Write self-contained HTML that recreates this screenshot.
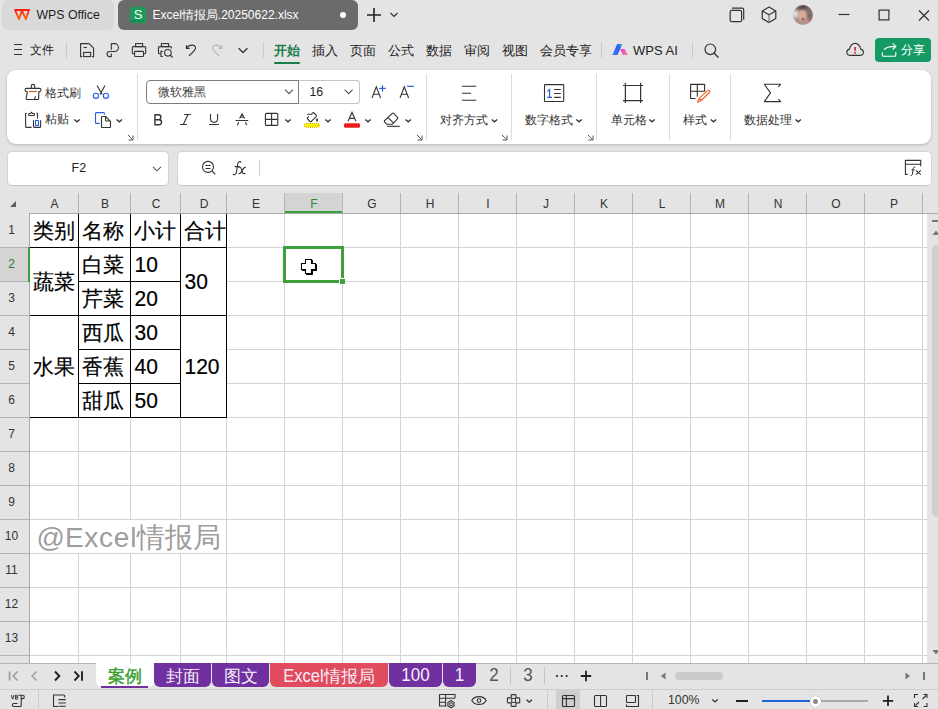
<!DOCTYPE html><html><head><meta charset="utf-8"><style>
html,body{margin:0;padding:0;}
body{width:938px;height:709px;position:relative;overflow:hidden;background:#e4e4e4;font-family:"Liberation Sans", sans-serif;}
div,svg{box-sizing:border-box;}
</style></head><body>
<div style="position:absolute;left:2px;top:0px;width:112px;height:30px;background:#d9d9d9;border-radius:6px;"></div>
<div style="position:absolute;left:36.5px;top:8px;font-size:12.3px;line-height:14px;color:#1f1f1f;white-space:nowrap;">WPS Office</div>
<div style="position:absolute;left:118px;top:0px;width:240px;height:30px;background:#6b6b6b;border-radius:6px;"></div>
<div style="position:absolute;left:130px;top:7px;width:16px;height:16px;background:#1a9c5b;border-radius:2px;"></div>
<div style="position:absolute;left:133.8px;top:8px;font-size:13px;line-height:14px;color:#fff;white-space:nowrap;">S</div>
<div style="position:absolute;left:131px;top:20px;width:14px;height:2px;background:repeating-linear-gradient(90deg,#0d7a43 0 1px,#1a9c5b 1px 2px);"></div>
<div style="position:absolute;left:152.5px;top:8px;font-size:12px;line-height:14px;color:#fff;white-space:nowrap;">Excel情报局.20250622.xlsx</div>
<div style="position:absolute;left:339.5px;top:12px;width:6px;height:6px;background:#fff;border-radius:50%;"></div>
<div style="position:absolute;left:793px;top:5px;width:20px;height:20px;border-radius:50%;overflow:hidden;background:radial-gradient(circle at 50% 70%,#8a3a44 0,rgba(138,58,68,0) 12%),radial-gradient(ellipse 26% 34% at 46% 52%,#dcb3a0 0,#d4a994 60%,rgba(212,169,148,0) 100%),radial-gradient(circle at 12% 45%,#eceaee 0,rgba(236,234,238,0) 28%),radial-gradient(ellipse 55% 35% at 50% 8%,#4c3e3c 0,rgba(76,62,60,0) 100%),radial-gradient(ellipse 22% 45% at 84% 50%,#6e6260 0,rgba(110,98,96,0) 100%),radial-gradient(circle at 78% 85%,#d08a86 0,rgba(208,138,134,0) 30%),#a8948c;"></div>
<div style="position:absolute;left:30px;top:43.5px;font-size:12px;line-height:13px;color:#222;white-space:nowrap;">文件</div>
<div style="position:absolute;left:66px;top:42px;width:1px;height:16px;background:#c9c9c9;"></div>
<div style="position:absolute;left:263px;top:42px;width:1px;height:16px;background:#c9c9c9;"></div>
<div style="position:absolute;left:274px;top:44px;font-size:13px;line-height:14px;color:#1b7d4c;white-space:nowrap;font-weight:bold;">开始</div>
<div style="position:absolute;left:274px;top:62px;width:26px;height:2px;background:#1b7d4c;border-radius:1px;"></div>
<div style="position:absolute;left:312px;top:44px;font-size:13px;line-height:14px;color:#222;white-space:nowrap;">插入</div>
<div style="position:absolute;left:350px;top:44px;font-size:13px;line-height:14px;color:#222;white-space:nowrap;">页面</div>
<div style="position:absolute;left:388px;top:44px;font-size:13px;line-height:14px;color:#222;white-space:nowrap;">公式</div>
<div style="position:absolute;left:426px;top:44px;font-size:13px;line-height:14px;color:#222;white-space:nowrap;">数据</div>
<div style="position:absolute;left:464px;top:44px;font-size:13px;line-height:14px;color:#222;white-space:nowrap;">审阅</div>
<div style="position:absolute;left:502px;top:44px;font-size:13px;line-height:14px;color:#222;white-space:nowrap;">视图</div>
<div style="position:absolute;left:540px;top:44px;font-size:13px;line-height:14px;color:#222;white-space:nowrap;">会员专享</div>
<div style="position:absolute;left:601px;top:42px;width:1px;height:16px;background:#c9c9c9;"></div>
<div style="position:absolute;left:633px;top:44px;font-size:13px;line-height:14px;color:#222;white-space:nowrap;">WPS AI</div>
<div style="position:absolute;left:692px;top:42px;width:1px;height:16px;background:#c9c9c9;"></div>
<div style="position:absolute;left:875px;top:38px;width:56px;height:24px;background:#169a65;border-radius:4px;"></div>
<div style="position:absolute;left:901px;top:43.5px;font-size:12.3px;line-height:13px;color:#fff;white-space:nowrap;">分享</div>
<div style="position:absolute;left:7px;top:70px;width:924px;height:74px;background:#fff;border-radius:9px;box-shadow:0 1px 3px rgba(0,0,0,0.2);"></div>
<div style="position:absolute;left:45px;top:86.5px;font-size:12px;line-height:12px;color:#333;white-space:nowrap;">格式刷</div>
<div style="position:absolute;left:45px;top:113px;font-size:12px;line-height:12px;color:#333;white-space:nowrap;">粘贴</div>
<div style="position:absolute;left:137px;top:74px;width:1px;height:66px;background:#dadada;"></div>
<div style="position:absolute;left:146px;top:80px;width:214px;height:24px;border:1px solid #7d7d7d;border-radius:4px;"></div>
<div style="position:absolute;left:298px;top:80px;width:62px;height:24px;border:1px solid #c6c6c6;border-left:1px solid #7d7d7d;border-radius:0 4px 4px 0;background:#fff;"></div>
<div style="position:absolute;left:158px;top:86px;font-size:12px;line-height:12px;color:#3a3a3a;white-space:nowrap;">微软雅黑</div>
<div style="position:absolute;left:309.5px;top:86px;font-size:12.3px;line-height:13px;color:#222;white-space:nowrap;">16</div>
<div style="position:absolute;left:426px;top:74px;width:1px;height:66px;background:#dadada;"></div>
<div style="position:absolute;left:440px;top:114px;font-size:12px;line-height:12px;color:#333;white-space:nowrap;">对齐方式</div>
<div style="position:absolute;left:511px;top:74px;width:1px;height:66px;background:#dadada;"></div>
<div style="position:absolute;left:525px;top:114px;font-size:12px;line-height:12px;color:#333;white-space:nowrap;">数字格式</div>
<div style="position:absolute;left:596px;top:74px;width:1px;height:66px;background:#dadada;"></div>
<div style="position:absolute;left:610.5px;top:114px;font-size:12px;line-height:12px;color:#333;white-space:nowrap;">单元格</div>
<div style="position:absolute;left:669px;top:74px;width:1px;height:66px;background:#dadada;"></div>
<div style="position:absolute;left:682.5px;top:114px;font-size:12px;line-height:12px;color:#333;white-space:nowrap;">样式</div>
<div style="position:absolute;left:730px;top:74px;width:1px;height:66px;background:#dadada;"></div>
<div style="position:absolute;left:744px;top:114px;font-size:12px;line-height:12px;color:#333;white-space:nowrap;">数据处理</div>
<div style="position:absolute;left:7px;top:151px;width:162px;height:35px;background:#fff;border:1px solid #d3d3d3;border-bottom-color:#c4c4c4;border-radius:5px;"></div>
<div style="position:absolute;left:71.5px;top:162px;font-size:12.5px;line-height:13px;color:#222;white-space:nowrap;">F2</div>
<div style="position:absolute;left:177px;top:151px;width:755px;height:35px;background:#fff;border:1px solid #d3d3d3;border-bottom-color:#c4c4c4;border-radius:5px;"></div>
<div style="position:absolute;left:259px;top:160px;width:1px;height:16px;background:#cfcfcf;"></div>
<div style="position:absolute;left:30px;top:214px;width:897px;height:449px;background:#fff;"></div>
<div style="position:absolute;left:285px;top:193px;width:57px;height:20px;background:#d4d4d4;"></div>
<div style="position:absolute;left:285px;top:211px;width:57px;height:2px;background:#3ba03b;"></div>
<div style="position:absolute;left:0px;top:248px;width:29px;height:33px;background:#d4d4d4;"></div>
<div style="position:absolute;left:78px;top:214px;width:1px;height:449px;background:#d4d4d4;"></div>
<div style="position:absolute;left:130px;top:214px;width:1px;height:449px;background:#d4d4d4;"></div>
<div style="position:absolute;left:180px;top:214px;width:1px;height:449px;background:#d4d4d4;"></div>
<div style="position:absolute;left:226px;top:214px;width:1px;height:449px;background:#d4d4d4;"></div>
<div style="position:absolute;left:284px;top:214px;width:1px;height:449px;background:#d4d4d4;"></div>
<div style="position:absolute;left:342px;top:214px;width:1px;height:449px;background:#d4d4d4;"></div>
<div style="position:absolute;left:400px;top:214px;width:1px;height:449px;background:#d4d4d4;"></div>
<div style="position:absolute;left:458px;top:214px;width:1px;height:449px;background:#d4d4d4;"></div>
<div style="position:absolute;left:516px;top:214px;width:1px;height:449px;background:#d4d4d4;"></div>
<div style="position:absolute;left:574px;top:214px;width:1px;height:449px;background:#d4d4d4;"></div>
<div style="position:absolute;left:632px;top:214px;width:1px;height:449px;background:#d4d4d4;"></div>
<div style="position:absolute;left:690px;top:214px;width:1px;height:449px;background:#d4d4d4;"></div>
<div style="position:absolute;left:748px;top:214px;width:1px;height:449px;background:#d4d4d4;"></div>
<div style="position:absolute;left:806px;top:214px;width:1px;height:449px;background:#d4d4d4;"></div>
<div style="position:absolute;left:864px;top:214px;width:1px;height:449px;background:#d4d4d4;"></div>
<div style="position:absolute;left:922px;top:214px;width:1px;height:449px;background:#d4d4d4;"></div>
<div style="position:absolute;left:30px;top:247px;width:897px;height:1px;background:#d4d4d4;"></div>
<div style="position:absolute;left:30px;top:281px;width:897px;height:1px;background:#d4d4d4;"></div>
<div style="position:absolute;left:30px;top:315px;width:897px;height:1px;background:#d4d4d4;"></div>
<div style="position:absolute;left:30px;top:349px;width:897px;height:1px;background:#d4d4d4;"></div>
<div style="position:absolute;left:30px;top:383px;width:897px;height:1px;background:#d4d4d4;"></div>
<div style="position:absolute;left:30px;top:417px;width:897px;height:1px;background:#d4d4d4;"></div>
<div style="position:absolute;left:30px;top:451px;width:897px;height:1px;background:#d4d4d4;"></div>
<div style="position:absolute;left:30px;top:485px;width:897px;height:1px;background:#d4d4d4;"></div>
<div style="position:absolute;left:30px;top:519px;width:897px;height:1px;background:#d4d4d4;"></div>
<div style="position:absolute;left:30px;top:553px;width:897px;height:1px;background:#d4d4d4;"></div>
<div style="position:absolute;left:30px;top:587px;width:897px;height:1px;background:#d4d4d4;"></div>
<div style="position:absolute;left:30px;top:621px;width:897px;height:1px;background:#d4d4d4;"></div>
<div style="position:absolute;left:30px;top:655px;width:897px;height:1px;background:#d4d4d4;"></div>
<div style="position:absolute;left:78px;top:193px;width:1px;height:20px;background:#b3b3b3;"></div>
<div style="position:absolute;left:130px;top:193px;width:1px;height:20px;background:#b3b3b3;"></div>
<div style="position:absolute;left:180px;top:193px;width:1px;height:20px;background:#b3b3b3;"></div>
<div style="position:absolute;left:226px;top:193px;width:1px;height:20px;background:#b3b3b3;"></div>
<div style="position:absolute;left:284px;top:193px;width:1px;height:20px;background:#b3b3b3;"></div>
<div style="position:absolute;left:342px;top:193px;width:1px;height:20px;background:#b3b3b3;"></div>
<div style="position:absolute;left:400px;top:193px;width:1px;height:20px;background:#b3b3b3;"></div>
<div style="position:absolute;left:458px;top:193px;width:1px;height:20px;background:#b3b3b3;"></div>
<div style="position:absolute;left:516px;top:193px;width:1px;height:20px;background:#b3b3b3;"></div>
<div style="position:absolute;left:574px;top:193px;width:1px;height:20px;background:#b3b3b3;"></div>
<div style="position:absolute;left:632px;top:193px;width:1px;height:20px;background:#b3b3b3;"></div>
<div style="position:absolute;left:690px;top:193px;width:1px;height:20px;background:#b3b3b3;"></div>
<div style="position:absolute;left:748px;top:193px;width:1px;height:20px;background:#b3b3b3;"></div>
<div style="position:absolute;left:806px;top:193px;width:1px;height:20px;background:#b3b3b3;"></div>
<div style="position:absolute;left:864px;top:193px;width:1px;height:20px;background:#b3b3b3;"></div>
<div style="position:absolute;left:922px;top:193px;width:1px;height:20px;background:#b3b3b3;"></div>
<div style="position:absolute;left:0px;top:247px;width:29px;height:1px;background:#b3b3b3;"></div>
<div style="position:absolute;left:0px;top:281px;width:29px;height:1px;background:#b3b3b3;"></div>
<div style="position:absolute;left:0px;top:315px;width:29px;height:1px;background:#b3b3b3;"></div>
<div style="position:absolute;left:0px;top:349px;width:29px;height:1px;background:#b3b3b3;"></div>
<div style="position:absolute;left:0px;top:383px;width:29px;height:1px;background:#b3b3b3;"></div>
<div style="position:absolute;left:0px;top:417px;width:29px;height:1px;background:#b3b3b3;"></div>
<div style="position:absolute;left:0px;top:451px;width:29px;height:1px;background:#b3b3b3;"></div>
<div style="position:absolute;left:0px;top:485px;width:29px;height:1px;background:#b3b3b3;"></div>
<div style="position:absolute;left:0px;top:519px;width:29px;height:1px;background:#b3b3b3;"></div>
<div style="position:absolute;left:0px;top:553px;width:29px;height:1px;background:#b3b3b3;"></div>
<div style="position:absolute;left:0px;top:587px;width:29px;height:1px;background:#b3b3b3;"></div>
<div style="position:absolute;left:0px;top:621px;width:29px;height:1px;background:#b3b3b3;"></div>
<div style="position:absolute;left:0px;top:655px;width:29px;height:1px;background:#b3b3b3;"></div>
<div style="position:absolute;left:29px;top:213px;width:909px;height:1px;background:#a9a9a9;"></div>
<div style="position:absolute;left:29px;top:213px;width:1px;height:450px;background:#a9a9a9;"></div>
<div style="position:absolute;left:28px;top:247px;width:2px;height:35px;background:#3ba03b;"></div>
<div style="position:absolute;left:30px;top:197px;width:49px;text-align:center;font-size:12px;line-height:14px;color:#333;white-space:nowrap;">A</div>
<div style="position:absolute;left:79px;top:197px;width:52px;text-align:center;font-size:12px;line-height:14px;color:#333;white-space:nowrap;">B</div>
<div style="position:absolute;left:131px;top:197px;width:50px;text-align:center;font-size:12px;line-height:14px;color:#333;white-space:nowrap;">C</div>
<div style="position:absolute;left:181px;top:197px;width:46px;text-align:center;font-size:12px;line-height:14px;color:#333;white-space:nowrap;">D</div>
<div style="position:absolute;left:227px;top:197px;width:58px;text-align:center;font-size:12px;line-height:14px;color:#333;white-space:nowrap;">E</div>
<div style="position:absolute;left:285px;top:197px;width:58px;text-align:center;font-size:12px;line-height:14px;color:#2e8b2e;white-space:nowrap;">F</div>
<div style="position:absolute;left:343px;top:197px;width:58px;text-align:center;font-size:12px;line-height:14px;color:#333;white-space:nowrap;">G</div>
<div style="position:absolute;left:401px;top:197px;width:58px;text-align:center;font-size:12px;line-height:14px;color:#333;white-space:nowrap;">H</div>
<div style="position:absolute;left:459px;top:197px;width:58px;text-align:center;font-size:12px;line-height:14px;color:#333;white-space:nowrap;">I</div>
<div style="position:absolute;left:517px;top:197px;width:58px;text-align:center;font-size:12px;line-height:14px;color:#333;white-space:nowrap;">J</div>
<div style="position:absolute;left:575px;top:197px;width:58px;text-align:center;font-size:12px;line-height:14px;color:#333;white-space:nowrap;">K</div>
<div style="position:absolute;left:633px;top:197px;width:58px;text-align:center;font-size:12px;line-height:14px;color:#333;white-space:nowrap;">L</div>
<div style="position:absolute;left:691px;top:197px;width:58px;text-align:center;font-size:12px;line-height:14px;color:#333;white-space:nowrap;">M</div>
<div style="position:absolute;left:749px;top:197px;width:58px;text-align:center;font-size:12px;line-height:14px;color:#333;white-space:nowrap;">N</div>
<div style="position:absolute;left:807px;top:197px;width:58px;text-align:center;font-size:12px;line-height:14px;color:#333;white-space:nowrap;">O</div>
<div style="position:absolute;left:865px;top:197px;width:58px;text-align:center;font-size:12px;line-height:14px;color:#333;white-space:nowrap;">P</div>
<div style="position:absolute;left:0px;top:222.6px;width:23px;text-align:center;font-size:12px;line-height:14px;color:#333;white-space:nowrap;">1</div>
<div style="position:absolute;left:0px;top:256.6px;width:23px;text-align:center;font-size:12px;line-height:14px;color:#2e7d32;white-space:nowrap;">2</div>
<div style="position:absolute;left:0px;top:290.6px;width:23px;text-align:center;font-size:12px;line-height:14px;color:#333;white-space:nowrap;">3</div>
<div style="position:absolute;left:0px;top:324.6px;width:23px;text-align:center;font-size:12px;line-height:14px;color:#333;white-space:nowrap;">4</div>
<div style="position:absolute;left:0px;top:358.6px;width:23px;text-align:center;font-size:12px;line-height:14px;color:#333;white-space:nowrap;">5</div>
<div style="position:absolute;left:0px;top:392.6px;width:23px;text-align:center;font-size:12px;line-height:14px;color:#333;white-space:nowrap;">6</div>
<div style="position:absolute;left:0px;top:426.6px;width:23px;text-align:center;font-size:12px;line-height:14px;color:#333;white-space:nowrap;">7</div>
<div style="position:absolute;left:0px;top:460.6px;width:23px;text-align:center;font-size:12px;line-height:14px;color:#333;white-space:nowrap;">8</div>
<div style="position:absolute;left:0px;top:494.6px;width:23px;text-align:center;font-size:12px;line-height:14px;color:#333;white-space:nowrap;">9</div>
<div style="position:absolute;left:0px;top:528.6px;width:23px;text-align:center;font-size:12px;line-height:14px;color:#333;white-space:nowrap;">10</div>
<div style="position:absolute;left:0px;top:562.6px;width:23px;text-align:center;font-size:12px;line-height:14px;color:#333;white-space:nowrap;">11</div>
<div style="position:absolute;left:0px;top:596.6px;width:23px;text-align:center;font-size:12px;line-height:14px;color:#333;white-space:nowrap;">12</div>
<div style="position:absolute;left:0px;top:630.6px;width:23px;text-align:center;font-size:12px;line-height:14px;color:#333;white-space:nowrap;">13</div>
<div style="position:absolute;left:78px;top:520px;width:1px;height:33px;background:#fff;"></div>
<div style="position:absolute;left:130px;top:520px;width:1px;height:33px;background:#fff;"></div>
<div style="position:absolute;left:180px;top:520px;width:1px;height:33px;background:#fff;"></div>
<div style="position:absolute;left:36.5px;top:521.5px;font-size:28px;line-height:32px;color:#9d9d9d;white-space:nowrap;">@<span style="letter-spacing:0.75px">Excel</span>情报局</div>
<div style="position:absolute;left:30px;top:214px;width:196px;height:203px;background:#fff;"></div>
<div style="position:absolute;left:30px;top:247px;width:197px;height:1px;background:#000;"></div>
<div style="position:absolute;left:79px;top:281px;width:102px;height:1px;background:#000;"></div>
<div style="position:absolute;left:30px;top:315px;width:197px;height:1px;background:#000;"></div>
<div style="position:absolute;left:79px;top:349px;width:102px;height:1px;background:#000;"></div>
<div style="position:absolute;left:79px;top:383px;width:102px;height:1px;background:#000;"></div>
<div style="position:absolute;left:30px;top:417px;width:197px;height:1px;background:#000;"></div>
<div style="position:absolute;left:78px;top:214px;width:1px;height:204px;background:#000;"></div>
<div style="position:absolute;left:130px;top:214px;width:1px;height:204px;background:#000;"></div>
<div style="position:absolute;left:180px;top:214px;width:1px;height:204px;background:#000;"></div>
<div style="position:absolute;left:226px;top:214px;width:1px;height:204px;background:#000;"></div>
<div style="position:absolute;left:33px;top:219px;font-size:21px;line-height:24px;color:#000;white-space:nowrap;-webkit-text-stroke:0.2px #000;">类别</div>
<div style="position:absolute;left:82px;top:219px;font-size:21px;line-height:24px;color:#000;white-space:nowrap;-webkit-text-stroke:0.2px #000;">名称</div>
<div style="position:absolute;left:134px;top:219px;font-size:21px;line-height:24px;color:#000;white-space:nowrap;-webkit-text-stroke:0.2px #000;">小计</div>
<div style="position:absolute;left:184px;top:219px;font-size:21px;line-height:24px;color:#000;white-space:nowrap;-webkit-text-stroke:0.2px #000;">合计</div>
<div style="position:absolute;left:33px;top:270px;font-size:21px;line-height:24px;color:#000;white-space:nowrap;-webkit-text-stroke:0.2px #000;">蔬菜</div>
<div style="position:absolute;left:82px;top:253px;font-size:21px;line-height:24px;color:#000;white-space:nowrap;-webkit-text-stroke:0.2px #000;">白菜</div>
<div style="position:absolute;left:82px;top:287px;font-size:21px;line-height:24px;color:#000;white-space:nowrap;-webkit-text-stroke:0.2px #000;">芹菜</div>
<div style="position:absolute;left:134.5px;top:253px;font-size:21px;line-height:24px;color:#000;white-space:nowrap;transform:scaleY(1.05);transform-origin:0 12.3px;-webkit-text-stroke:0.2px #000;">10</div>
<div style="position:absolute;left:134.5px;top:287px;font-size:21px;line-height:24px;color:#000;white-space:nowrap;transform:scaleY(1.05);transform-origin:0 12.3px;-webkit-text-stroke:0.2px #000;">20</div>
<div style="position:absolute;left:184.5px;top:270px;font-size:21px;line-height:24px;color:#000;white-space:nowrap;transform:scaleY(1.05);transform-origin:0 12.3px;-webkit-text-stroke:0.2px #000;">30</div>
<div style="position:absolute;left:33px;top:355px;font-size:21px;line-height:24px;color:#000;white-space:nowrap;-webkit-text-stroke:0.2px #000;">水果</div>
<div style="position:absolute;left:82px;top:321px;font-size:21px;line-height:24px;color:#000;white-space:nowrap;-webkit-text-stroke:0.2px #000;">西瓜</div>
<div style="position:absolute;left:82px;top:355px;font-size:21px;line-height:24px;color:#000;white-space:nowrap;-webkit-text-stroke:0.2px #000;">香蕉</div>
<div style="position:absolute;left:82px;top:389px;font-size:21px;line-height:24px;color:#000;white-space:nowrap;-webkit-text-stroke:0.2px #000;">甜瓜</div>
<div style="position:absolute;left:134.5px;top:321px;font-size:21px;line-height:24px;color:#000;white-space:nowrap;transform:scaleY(1.05);transform-origin:0 12.3px;-webkit-text-stroke:0.2px #000;">30</div>
<div style="position:absolute;left:134.5px;top:355px;font-size:21px;line-height:24px;color:#000;white-space:nowrap;transform:scaleY(1.05);transform-origin:0 12.3px;-webkit-text-stroke:0.2px #000;">40</div>
<div style="position:absolute;left:134.5px;top:389px;font-size:21px;line-height:24px;color:#000;white-space:nowrap;transform:scaleY(1.05);transform-origin:0 12.3px;-webkit-text-stroke:0.2px #000;">50</div>
<div style="position:absolute;left:184.5px;top:355px;font-size:21px;line-height:24px;color:#000;white-space:nowrap;transform:scaleY(1.05);transform-origin:0 12.3px;-webkit-text-stroke:0.2px #000;">120</div>
<div style="position:absolute;left:283px;top:246px;width:61px;height:37px;border:3px solid #3da03d;"></div>
<div style="position:absolute;left:339px;top:278px;width:6px;height:6px;background:#fff;"></div>
<div style="position:absolute;left:340px;top:279px;width:5px;height:5px;background:#3da03d;"></div>
<div style="position:absolute;left:927px;top:214px;width:11px;height:449px;background:#e4e4e4;"></div>
<div style="position:absolute;left:932px;top:220px;width:6px;height:2px;background:#777;"></div>
<div style="position:absolute;left:932px;top:245px;width:10px;height:272px;background:#cfcfcf;border-radius:5px;"></div>
<div style="position:absolute;left:0px;top:663px;width:938px;height:26px;background:#e4e4e4;"></div>
<div style="position:absolute;left:0px;top:663px;width:938px;height:1px;background:#b5b5b5;"></div>
<div style="position:absolute;left:96px;top:663px;width:58px;height:24px;background:#fff;border-radius:0 0 6px 6px;"></div>
<div style="position:absolute;left:108px;top:667px;font-size:16.5px;line-height:18px;color:#3a9e2e;white-space:nowrap;-webkit-text-stroke:0.45px #3a9e2e;">案例</div>
<div style="position:absolute;left:101px;top:686px;width:47px;height:2px;background:#7030a0;"></div>
<div style="position:absolute;left:154px;top:663px;width:57px;height:24px;background:#7030a0;border-radius:0 0 6px 6px;"></div>
<div style="position:absolute;left:154px;top:667.2px;width:57px;text-align:center;font-size:16.5px;line-height:18px;color:#f6eef8;white-space:nowrap;">封面</div>
<div style="position:absolute;left:212px;top:663px;width:57px;height:24px;background:#7030a0;border-radius:0 0 6px 6px;"></div>
<div style="position:absolute;left:212px;top:667.2px;width:57px;text-align:center;font-size:16.5px;line-height:18px;color:#f6eef8;white-space:nowrap;">图文</div>
<div style="position:absolute;left:270px;top:663px;width:118px;height:24px;background:#e04b5e;border-radius:0 0 6px 6px;"></div>
<div style="position:absolute;left:270px;top:667.2px;width:118px;text-align:center;font-size:16.5px;line-height:18px;color:#f6eef8;white-space:nowrap;"><span style="display:inline-block;transform:scaleY(1.12);transform-origin:50% 14.2px;">Excel</span>情报局</div>
<div style="position:absolute;left:389px;top:663px;width:53px;height:24px;background:#7030a0;border-radius:0 0 6px 6px;"></div>
<div style="position:absolute;left:389px;top:667.2px;width:53px;text-align:center;font-size:17px;line-height:18px;color:#f6eef8;white-space:nowrap;"><span style="display:inline-block;transform:scaleY(1.12);transform-origin:50% 14.2px;">100</span></div>
<div style="position:absolute;left:443px;top:663px;width:33px;height:24px;background:#7030a0;border-radius:0 0 6px 6px;"></div>
<div style="position:absolute;left:443px;top:667.2px;width:33px;text-align:center;font-size:17px;line-height:18px;color:#f6eef8;white-space:nowrap;"><span style="display:inline-block;transform:scaleY(1.12);transform-origin:50% 14.2px;">1</span></div>
<div style="position:absolute;left:480px;top:667.2px;width:28px;text-align:center;font-size:17px;line-height:18px;color:#555;white-space:nowrap;"><span style="display:inline-block;transform:scaleY(1.12);transform-origin:50% 14.2px;">2</span></div>
<div style="position:absolute;left:510px;top:667px;width:1px;height:17px;background:#c4c4c4;"></div>
<div style="position:absolute;left:514px;top:667.2px;width:28px;text-align:center;font-size:17px;line-height:18px;color:#555;white-space:nowrap;"><span style="display:inline-block;transform:scaleY(1.12);transform-origin:50% 14.2px;">3</span></div>
<div style="position:absolute;left:544px;top:667px;width:1px;height:17px;background:#c4c4c4;"></div>
<div style="position:absolute;left:646px;top:672px;width:2px;height:8px;background:#777;"></div>
<div style="position:absolute;left:675px;top:672px;width:48px;height:8px;background:#cbcbcb;border-radius:4px;"></div>
<div style="position:absolute;left:923px;top:672px;width:2px;height:8px;background:#777;"></div>
<div style="position:absolute;left:0px;top:689px;width:938px;height:1px;background:#cccccc;"></div>
<div style="position:absolute;left:38px;top:690px;width:1px;height:19px;background:#cccccc;"></div>
<div style="position:absolute;left:547px;top:690px;width:1px;height:19px;background:#cccccc;"></div>
<div style="position:absolute;left:556px;top:689px;width:24px;height:20px;background:#cfcfcf;border-radius:3px 3px 0 0;"></div>
<div style="position:absolute;left:652px;top:690px;width:1px;height:19px;background:#cccccc;"></div>
<div style="position:absolute;left:668px;top:694px;font-size:12.3px;line-height:13px;color:#333;white-space:nowrap;">100%</div>
<div style="position:absolute;left:736px;top:700px;width:12px;height:2px;background:#222;"></div>
<div style="position:absolute;left:762px;top:700px;width:50px;height:2px;background:#2563d9;"></div>
<div style="position:absolute;left:812px;top:700px;width:56px;height:2px;background:#a9a9a9;"></div>
<div style="position:absolute;left:810px;top:695.5px;width:11px;height:11px;background:#fff;border-radius:50%;box-shadow:0 0 1px rgba(0,0,0,.45);"></div>
<div style="position:absolute;left:813px;top:698.5px;width:5px;height:5px;background:#8a8a8a;border-radius:50%;"></div>
<svg style="position:absolute;left:0;top:0;" width="938" height="709" viewBox="0 0 938 709" fill="none"><defs><linearGradient id="wl" x1="0" y1="9" x2="0" y2="20" gradientUnits="userSpaceOnUse"><stop offset="0" stop-color="#ff1616"/><stop offset="1" stop-color="#ff6a00"/></linearGradient><linearGradient id="g1" x1="612" y1="0" x2="628" y2="0" gradientUnits="userSpaceOnUse"><stop offset="0" stop-color="#3f6ff5"/><stop offset="0.55" stop-color="#9d5cf2"/><stop offset="1" stop-color="#f7708f"/></linearGradient></defs><path d="M15 10H22.2L19 19.2Z M21.8 10H29L25.8 19.2Z" stroke="url(#wl)" stroke-width="1.8" stroke-linejoin="round"/><path d="M374 8V22 M367 15H381" stroke="#222" stroke-width="1.6" /><path d="M390.5 13L394 16.5L397.5 13" stroke="#333" stroke-width="1.2" /><path d="M732 8.2H742.2a1.5 1.5 0 0 1 1.5 1.5V19.7" stroke="#333" stroke-width="1.2" /><rect x="730.2" y="10.4" width="11.4" height="11.3" rx="1.5" stroke="#333" stroke-width="1.2"/><path d="M769 7L775.8 11V18.6L769 22.5L762.2 18.6V11Z M762.4 11.1L769 14.8L775.6 11.1" stroke="#333" stroke-width="1.2" stroke-linejoin="round"/><path d="M769 14.8V22.3" stroke="#777" stroke-width="1.2" /><path d="M838.5 14.5H849.5" stroke="#333" stroke-width="1.2" /><rect x="879.1" y="10.1" width="9.8" height="9.8" stroke="#333" stroke-width="1.2"/><path d="M919 10.5L929 20.5M929 10.5L919 20.5" stroke="#333" stroke-width="1.2" /><path d="M14 44.5H22M14 49.5H22M14 54.5H22" stroke="#333" stroke-width="1.1" /><path d="M82.2 56.6H80.6V43.6H89L93.6 48.2V56.6H92" stroke="#333" stroke-width="1.1" stroke-linejoin="round"/><rect x="83.6" y="52.4" width="7" height="4.2" stroke="#333" stroke-width="1.1"/><path d="M83.6 47.5H86.8" stroke="#333" stroke-width="1.1" /><path d="M111.3 49.7V43.6H114.8A3.6 3.95 0 0 1 114.8 51.5H109.6A2.55 2.55 0 0 0 109.6 56.6H111.3V53.5" stroke="#333" stroke-width="1.1" stroke-linejoin="round"/><rect x="135.6" y="43.6" width="7" height="3" stroke="#333" stroke-width="1.1"/><path d="M134.5 53.8H133.3a1 1 0 0 1-1-1V47.6a1 1 0 0 1 1-1H144.7a1 1 0 0 1 1 1V52.8a1 1 0 0 1-1 1H143.5" stroke="#333" stroke-width="1.1" /><rect x="134.6" y="51.4" width="8.9" height="5.1" rx="0.8" stroke="#333" stroke-width="1.1"/><rect x="161.4" y="43.6" width="7.2" height="3" stroke="#333" stroke-width="1.1"/><path d="M160.8 53.8H159.5a1 1 0 0 1-1-1V47.6a1 1 0 0 1 1-1H170.5a1 1 0 0 1 1 1V48.5" stroke="#333" stroke-width="1.1" /><path d="M162.8 51.4H161V56.5H162.8" stroke="#333" stroke-width="1.1" /><circle cx="167.9" cy="52.8" r="3.3" stroke="#333" stroke-width="1.1"/><path d="M170.3 55.2L172.6 57.5" stroke="#333" stroke-width="1.2" /><path d="M186.5 45.2V48.4H189.7" stroke="#333" stroke-width="1.3" /><path d="M186.7 48.2C188.8 44.5 195.5 43.6 195.5 48.2C195.5 50 192.5 52.5 189 55.8" stroke="#333" stroke-width="1.1" /><path d="M221.5 45.2V48.4H218.3" stroke="#b8b8b8" stroke-width="1.3" /><path d="M221.3 48.2C219.2 44.5 212.5 43.6 212.5 48.2C212.5 50 215.5 52.5 219 55.8" stroke="#b8b8b8" stroke-width="1.1" /><path d="M238.6 48.3L243 52.5L247.4 48.3" stroke="#333" stroke-width="1.3" /><defs><linearGradient id="ab" x1="612" y1="55" x2="622" y2="44" gradientUnits="userSpaceOnUse"><stop offset="0" stop-color="#3d7bf7"/><stop offset="0.7" stop-color="#2f5cf0"/><stop offset="1" stop-color="#1fb8e8"/></linearGradient><linearGradient id="ap" x1="620" y1="49" x2="628" y2="55" gradientUnits="userSpaceOnUse"><stop offset="0" stop-color="#f03ce0"/><stop offset="0.6" stop-color="#f55fb0"/><stop offset="1" stop-color="#fb9a70"/></linearGradient></defs><path d="M612.4 54.9L617.2 43.9H622.3L617.5 54.9Z" fill="url(#ab)"/><path d="M620 49H624.7L627.9 54.9H623Z" fill="url(#ap)"/><circle cx="710.3" cy="49.3" r="5.3" stroke="#333" stroke-width="1.2"/><path d="M714.2 53.2L718.5 57.5" stroke="#333" stroke-width="1.3" /><path d="M850.8 55.4H859.8C862.2 55.4 863.4 53.9 863.4 52.2C863.4 50.6 862.3 49.5 860.8 49.1C859.8 45.4 857.6 43.4 855.1 43.4C852.6 43.4 850.4 45.4 849.4 49.1C847.9 49.5 846.8 50.6 846.8 52.2C846.8 53.9 848.2 55.4 850.8 55.4Z" stroke="#333" stroke-width="1.1" /><path d="M855.1 47V50.8" stroke="#e0243c" stroke-width="1.7" /><circle cx="855.1" cy="52.7" r="0.95" fill="#e0243c"/><path d="M882.3 52.3V55a1.3 1.3 0 0 0 1.3 1.3H894.5a1.3 1.3 0 0 0 1.3-1.3V52.3" stroke="#fff" stroke-width="1.1" /><path d="M884 49.8C886 46.8 889.5 46.4 895.6 46.4 M892.6 43.3L895.8 46.4L892.6 49.5" stroke="#fff" stroke-width="1.1" /><path d="M31.3 88.4V86.1a1.7 1.7 0 0 1 3.4 0V88.4 M27.4 91.6H26.6a1.6 1.6 0 0 1 0-3.2H39.4a1.6 1.6 0 0 1 0 3.2H38.6 M27.4 91.6L26.2 98.2a1 1 0 0 0 1 1.3H37.6a1 1 0 0 0 1-0.9L38.9 91.6 M35.5 96.4L34.5 99.2" stroke="#333" stroke-width="1.1" stroke-linejoin="round"/><path d="M29 91.5H36.8" stroke="#d9581e" stroke-width="1.2" /><path d="M97.1 85.4L102.2 94.6 M105 85.4L99.9 94.6" stroke="#333" stroke-width="1.1" /><circle cx="95.9" cy="95.8" r="2.6" stroke="#2a5ee8" stroke-width="1.15"/><circle cx="105.9" cy="95.8" r="2.6" stroke="#2a5ee8" stroke-width="1.15"/><path d="M26.8 113.3H26.2a0.6 0.6 0 0 0-0.6 0.6V126.8a0.6 0.6 0 0 0 .6.6H31.6 M36.3 113.3H36.9a0.6 0.6 0 0 1 .6.6V118.6 M33.5 120.2V126.8a0.6 0.6 0 0 0 .6.6H40a0.6 0.6 0 0 0 .6-.6V120.2" stroke="#333" stroke-width="1.1" /><path d="M29.2 113.4H30.6L31.5 112.4L32.4 113.4H33.8a0.6 0.6 0 0 1 .6.6V114.9a0.6 0.6 0 0 1-.6.6H29.2a0.6 0.6 0 0 1-.6-.6V114a0.6 0.6 0 0 1 .6-.6Z" stroke="#333" stroke-width="1.05" /><rect x="35.5" y="120.5" width="3" height="5" stroke="#2a5ee8" stroke-width="1.1"/><path d="M74.3 119.4L77.0 121.80000000000001L79.7 119.4" stroke="#333" stroke-width="1.3" /><path d="M104.5 114.4V113.3a0.7 0.7 0 0 0-.7-.7H96.2a0.7 0.7 0 0 0-.7.7V122.8a0.6 0.6 0 0 0 .6.6H99.7" stroke="#2a5ee8" stroke-width="1.1" /><path d="M102.3 116.5H105.6L110.5 121.4V126.8a0.7 0.7 0 0 1-.7.7H102.2a0.7 0.7 0 0 1-.7-.7V117.2a0.7 0.7 0 0 1 .7-.7Z M105.6 116.6V120.4a0.6 0.6 0 0 0 .6.6H110.4" stroke="#333" stroke-width="1.1" stroke-linejoin="round"/><path d="M116.6 119.4L119.3 121.80000000000001L122.0 119.4" stroke="#333" stroke-width="1.3" /><path d="M128 135L132.5 139.5M133 135.5V140H128.5" stroke="#555" stroke-width="1" /><path d="M285 89.6L289 93.6L293 89.6" stroke="#555" stroke-width="1.1" /><path d="M344.6 89.6L348.6 93.6L352.6 89.6" stroke="#555" stroke-width="1.1" /><path d="M372 98L376.3 86.8L380.6 98 M373.6 94.2H379" stroke="#333" stroke-width="1.1" /><path d="M382.5 85.2V91.8 M379.2 88.4H385.8" stroke="#2a5ee8" stroke-width="1.2" /><path d="M400 98L404.3 86.8L408.6 98 M401.6 94.2H407" stroke="#333" stroke-width="1.1" /><path d="M407.1 86.3H414" stroke="#2a5ee8" stroke-width="1.2" /><path d="M154.9 114.7H158.4a2.5 2.5 0 0 1 0 5H154.9Z M154.9 119.7H159a2.55 2.55 0 0 1 0 5.1H154.9Z" stroke="#333" stroke-width="1.4" stroke-linejoin="round"/><path d="M184.1 114.5H190.8 M180.1 124.5H186.8 M188 114.5L183.3 124.5" stroke="#333" stroke-width="1.1" /><path d="M210.5 114.1V118.8a3.55 3.55 0 0 0 7.1 0V114.1 M209.1 124.5H218.9" stroke="#333" stroke-width="1.1" /><path d="M235.7 120.5H248.2 M239.6 118.6L242.1 113.9L244.6 118.6 M240.3 117.2H243.9 M238.7 122.2L237.4 125.3 M245.5 122.2L246.8 125.3" stroke="#333" stroke-width="1.1" /><rect x="265.4" y="113.4" width="12.4" height="12" rx="1" stroke="#333" stroke-width="1.1"/><path d="M271.6 113.4V125.4 M265.4 119.4H277.8" stroke="#333" stroke-width="1.1" /><path d="M285.3 119.4L288.0 121.80000000000001L290.7 119.4" stroke="#333" stroke-width="1.3" /><path d="M307.1 114.3H311.4L312.6 113a1 1 0 0 1 1.4 0L316.2 115.2a1 1 0 0 1 0 1.4L311.3 121.3a1 1 0 0 1-1.4 0L307.6 119a1 1 0 0 1 0-1.4L308.9 116.3" stroke="#333" stroke-width="1.1" stroke-linejoin="round"/><rect x="316.1" y="118.4" width="1.8" height="3.2" rx="0.5" fill="#333"/><rect x="304.6" y="123.6" width="14.8" height="3.6" rx="1.3" fill="#f4f400" stroke="#e39a00" stroke-width="1" stroke-dasharray="1 1"/><path d="M325.3 119.4L328.0 121.80000000000001L330.7 119.4" stroke="#333" stroke-width="1.3" /><path d="M348 121.3L352 112.4L356 121.3 M349.3 118.4H354.7" stroke="#333" stroke-width="1.1" /><rect x="344" y="123.3" width="16" height="4.5" rx="1.5" fill="#ee1c1c"/><path d="M365.3 119.4L368.0 121.80000000000001L370.7 119.4" stroke="#333" stroke-width="1.3" /><path d="M392.3 113.3a0.9 0.9 0 0 1 1.3 0L397.6 117.3a0.9 0.9 0 0 1 0 1.3L392.4 124.3H386.9L384.7 122.1a1.1 1.1 0 0 1 0-1.6Z M388.1 117.6L393.6 123.1" stroke="#333" stroke-width="1.1" stroke-linejoin="round"/><path d="M387 126.3H399.8" stroke="#333" stroke-width="1.1" /><path d="M405.5 119.4L408.2 121.80000000000001L410.9 119.4" stroke="#333" stroke-width="1.3" /><path d="M417 135L421.5 139.5M422 135.5V140H417.5" stroke="#555" stroke-width="1" /><path d="M462 86.2H476.2 M462 93.2H471 M462 100.2H476.2" stroke="#333" stroke-width="1.1" /><path d="M491.8 119.4L494.5 121.80000000000001L497.2 119.4" stroke="#333" stroke-width="1.3" /><path d="M502 135L506.5 139.5M507 135.5V140H502.5" stroke="#555" stroke-width="1" /><rect x="544.5" y="84.6" width="19.2" height="16.9" rx="0.6" stroke="#333" stroke-width="1.1"/><path d="M554.1 89.5H560.8 M554.1 93.5H560.8 M554.1 97.4H560.8" stroke="#333" stroke-width="1.1" /><path d="M547.3 91.6L549.6 89.3V97.4 M547.2 97.4H552" stroke="#2a5ee8" stroke-width="1.15" /><path d="M576.4 119.4L579.1 121.80000000000001L581.8 119.4" stroke="#333" stroke-width="1.3" /><path d="M588 135L592.5 139.5M593 135.5V140H588.5" stroke="#555" stroke-width="1" /><path d="M625.4 82.8V103 M640.6 82.8V103 M623 85.5H643 M623 100.6H643" stroke="#333" stroke-width="1.2" /><path d="M649.3 119.4L652.0 121.80000000000001L654.6999999999999 119.4" stroke="#333" stroke-width="1.3" /><path d="M695.5 98.5H690.6V84.4H704.6V91.3H690.6 M697.3 84.4V96.8" stroke="#333" stroke-width="1.1" /><path d="M697.6 102.2L699.3 98.4L707.5 90.6a1.3 1.3 0 0 1 1.9 1.9L701.2 100.5Z M699.3 98.4L701.3 100.4" stroke="#e8642a" stroke-width="1.1" stroke-linejoin="round"/><path d="M710.8 119.4L713.5 121.80000000000001L716.1999999999999 119.4" stroke="#333" stroke-width="1.3" /><path d="M778.3 86.8L780.6 84.3H764.3L770.5 92.9L764.3 101.6H780.6L778.3 99" stroke="#333" stroke-width="1.1" stroke-linejoin="round"/><path d="M795.5 119.4L798.2 121.80000000000001L800.9 119.4" stroke="#333" stroke-width="1.3" /><path d="M153 166.8L157 170.8L161 166.8" stroke="#555" stroke-width="1.1" /><circle cx="208" cy="166.9" r="5.5" stroke="#333" stroke-width="1.1"/><path d="M205.5 165.5H210.5 M205.5 168.5H210.5 M212 171L215.3 174.4" stroke="#333" stroke-width="1.1" /><path d="M241.2 162.3C240.3 161.2 238.2 161.4 237.8 163.5L236.4 172.4C236 174.6 234 175.1 232.8 174.1 M234.8 166.6H239.6" stroke="#333" stroke-width="1.1" /><path d="M238.6 167.6C239.8 166.8 240.6 167.2 241 168.4L242.8 172.8C243.2 173.9 244.2 174 245.4 173.2 M245.8 167.4C244.8 167.2 244 167.8 243.4 168.6L240.8 172.6C240.2 173.6 239.2 173.9 238.4 173.4" stroke="#333" stroke-width="1.1" /><path d="M907.8 174.4H905.4V160.4H920.7V166.3 M905.4 164.3H920.7" stroke="#333" stroke-width="1.1" /><path d="M915.3 167.4C914.7 166.7 913.5 166.9 913.2 168.3L912.4 174.1C912.1 175.4 911.2 175.9 910.6 175.6 M911.4 169.9H914.6" stroke="#333" stroke-width="1" /><path d="M915.9 170.3L920.8 174.6 M920.8 170.3L915.9 174.6" stroke="#333" stroke-width="1.1" /><path d="M16 201V207H10Z" fill="#5c5c5c"/><path d="M305.5 259.5H311.5V263.5H315.5V269.5H311.5V273.5H305.5V269.5H301.5V263.5H305.5Z" transform="translate(1 1)" fill="#000" stroke="#000" stroke-width="1"/><path d="M305.5 259.5H311.5V263.5H315.5V269.5H311.5V273.5H305.5V269.5H301.5V263.5H305.5Z" fill="#fff" stroke="#000" stroke-width="1.1"/><path d="M936 230.5L939.5 235H932.5Z" fill="#777"/><path d="M932.5 650H939.5L936 654.5Z" fill="#777"/><path d="M9.6 671.5V680.5 M17.5 671.5L13.2 676L17.5 680.5" stroke="#a0a0a0" stroke-width="1.8" /><path d="M36.5 671.5L32.2 676L36.5 680.5" stroke="#a8a8a8" stroke-width="1.8" /><path d="M55 671.5L59.3 676L55 680.5" stroke="#222" stroke-width="1.9" /><path d="M74.5 671.5L78.8 676L74.5 680.5 M82 671.2V680.8" stroke="#222" stroke-width="1.9" /><circle cx="557" cy="676" r="1.1" fill="#222"/><circle cx="561.8" cy="676" r="1.1" fill="#222"/><circle cx="566.6" cy="676" r="1.1" fill="#222"/><path d="M586 670.8V681.2 M580.8 676H591.2" stroke="#222" stroke-width="1.8" /><path d="M665.5 672.5V679.5L661 676Z" fill="#777"/><path d="M905.5 672.5V679.5L910 676Z" fill="#777"/><path d="M11.2 695L12.6 699.2L14 695 M15.4 695.2H16.6a1 1 0 0 1 0 2H15.4Z M15.4 697.2H16.9a1 1 0 0 1 0 2H15.4Z" stroke="#333" stroke-width="0.95" /><path d="M18.4 695.2H22.6a1.6 1.6 0 0 1 0 3.4H21.2 M21.2 695.2V705.5a1 1 0 0 1-1 1H13.8a1.5 1.5 0 0 1 0-3H17.5" stroke="#333" stroke-width="1.1" /><path d="M58 695H53.5V706.5H58 M58 695H63.5a1.2 1.2 0 0 1 1.2 1.2V697.5 M58.5 699.6H65.8 M58.5 703H65.8 M58.5 706.3H65.8" stroke="#333" stroke-width="1.1" /><path d="M439.5 694.5H455V698.2 M439.5 694.5V706H446.5 M439.5 698.2H455 M439.5 702.2H446 M445.6 694.5V706" stroke="#333" stroke-width="1.1" /><path d="M451 700.6L454.1 702.4V706L451 707.8L447.9 706V702.4Z" fill="#e4e4e4" stroke="#333" stroke-width="1.1" stroke-linejoin="round"/><circle cx="451" cy="704.2" r="1.5" stroke="#333" stroke-width="1"/><path d="M471.8 700.5C474.5 695.3 483.5 695.3 486.2 700.5C483.5 705.7 474.5 705.7 471.8 700.5Z" stroke="#333" stroke-width="1.1" /><circle cx="479" cy="700.5" r="1.8" stroke="#333" stroke-width="1.1"/><path d="M511.2 697.9V695.2a0.6 0.6 0 0 1 .6-.6H515.4a0.6 0.6 0 0 1 .6.6V697.9 M516 702.9V705.8a0.6 0.6 0 0 1-.6.6H511.8a0.6 0.6 0 0 1-.6-.6V702.9 M511.2 697.9H508a0.6 0.6 0 0 0-.6.6V702.3a0.6 0.6 0 0 0 .6.6H511.2 M516 697.9H519.1a0.6 0.6 0 0 1 .6.6V702.3a0.6 0.6 0 0 1-.6.6H516" stroke="#333" stroke-width="1.1" /><rect x="511.7" y="698.4" width="3.8" height="4" stroke="#333" stroke-width="1"/><path d="M526.5 699.8L529.2 702.1999999999999L531.9 699.8" stroke="#333" stroke-width="1.3" /><rect x="562.5" y="695.5" width="12" height="11" rx="1" stroke="#333" stroke-width="1.1"/><path d="M562.5 698.6H574.5 M566.4 695.5V706.5" stroke="#333" stroke-width="1.1" /><rect x="594.5" y="695.5" width="12" height="11" rx="1" stroke="#333" stroke-width="1.1"/><path d="M600.6 695.5V706.5" stroke="#333" stroke-width="1.1" /><rect x="626.5" y="695.5" width="9" height="7" rx="0.8" stroke="#333" stroke-width="1.1"/><path d="M636.8 695.5H638.5V706.5H626.5V704.5" stroke="#333" stroke-width="1.1" /><path d="M712.3 699.5L715.0 701.9L717.6999999999999 699.5" stroke="#333" stroke-width="1.3" /><path d="M888 695.5V706 M882.8 700.8H893.2" stroke="#222" stroke-width="1.8" /><path d="M914.5 698V694.5H918 M923.5 694.5H927V698 M927 703V706.5H923.5 M918 706.5H914.5V703 M915.5 705.5L919 702 M926 695.5L922.5 699" stroke="#333" stroke-width="1.1" /></svg>
</body></html>
